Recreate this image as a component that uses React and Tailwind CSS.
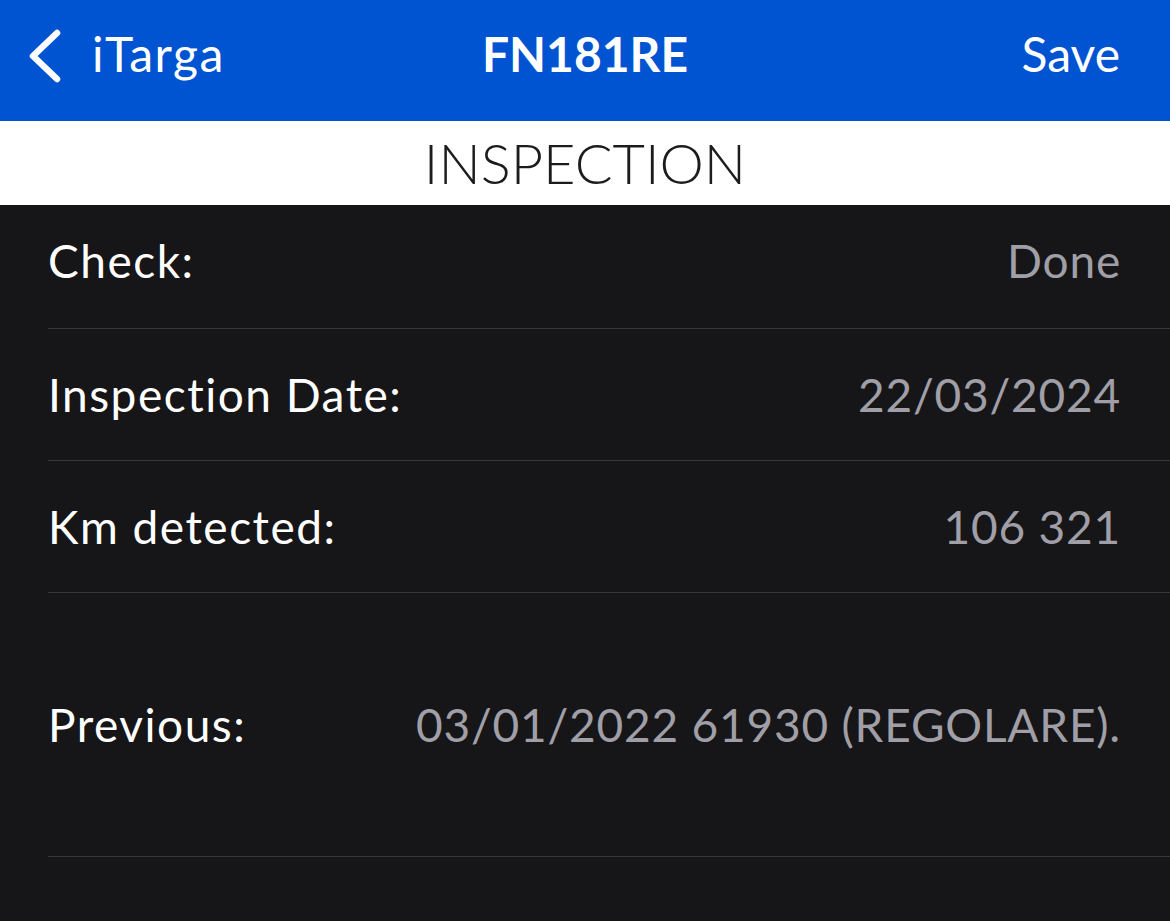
export default function App() {
  const rows = [
    { label: "Check:", value: "Done", h: "h-[124px] pb-[12px]" },
    { label: "Inspection Date:", value: "22/03/2024", h: "h-[132px]" },
    { label: "Km detected:", value: "106 321", h: "h-[132px]" },
    { label: "Previous:", value: "03/01/2022 61930 (REGOLARE).", h: "h-[264px]" },
  ];

  return (
    <div className="flex h-[921px] w-[1170px] flex-col overflow-hidden bg-[#161618] font-['Lato',sans-serif]">
      {/* Nav bar */}
      <header className="relative flex h-[121px] shrink-0 items-center bg-[#0053d1] px-6 pb-[14px] text-white">
        <button type="button" className="flex items-center gap-7">
          <svg width="40" height="60" viewBox="0 0 40 60" fill="none" className="mt-[4px]">
            <path
              d="M33 7 L9 30 L33 53"
              stroke="white"
              strokeWidth="6.5"
              strokeLinecap="round"
              strokeLinejoin="round"
            />
          </svg>
          <span className="text-[48px] leading-none tracking-[1.5px]">iTarga</span>
        </button>
        <h1 className="absolute left-1/2 -translate-x-1/2 text-[48px] font-bold leading-none">
          FN181RE
        </h1>
        <button type="button" className="ml-auto pr-[26px] text-[48px] leading-none">
          Save
        </button>
      </header>

      {/* Section title */}
      <div className="flex h-[84px] shrink-0 items-center justify-center bg-white">
        <span className="text-[56px] font-light leading-none text-[#1c1c1e]">
          INSPECTION
        </span>
      </div>

      {/* Rows */}
      <main className="flex flex-col pl-[48px]">
        {rows.map((row) => (
          <div
            key={row.label}
            className={`flex ${row.h} items-center justify-between border-b border-[#38383a] pr-[49px]`}
          >
            <span className="text-[46px] leading-none tracking-[1.5px] text-white">{row.label}</span>
            <span className="text-[46px] leading-none tracking-[0.8px] text-[#a09fa7]">{row.value}</span>
          </div>
        ))}
      </main>
    </div>
  );
}
